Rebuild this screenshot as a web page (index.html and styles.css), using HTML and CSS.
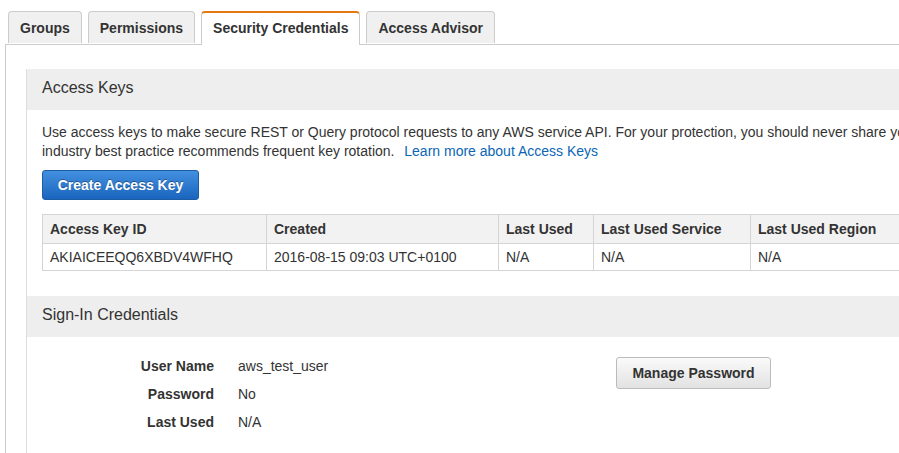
FILE: index.html
```html
<!DOCTYPE html>
<html>
<head>
<meta charset="utf-8">
<link rel="stylesheet" href="styles.css">
</head>
<body>
<div class="tabs">
  <div class="tab">Groups</div>
  <div class="tab">Permissions</div>
  <div class="tab active">Security Credentials</div>
  <div class="tab">Access Advisor</div>
</div>
<div class="panel">
  <div class="section">
    <div class="section-head">Access Keys</div>
    <div class="section-body keys-body">
      <p class="desc">Use access keys to make secure REST or Query protocol requests to any AWS service API. For your protection, you should never share your secret keys with anyone. As a best practice, we recommend frequent key rotation.<br>industry best practice recommends frequent key rotation.&nbsp; <a class="link" href="#">Learn more about Access Keys</a></p>
      <button class="btn-primary">Create Access Key</button>
      <table class="keys">
        <colgroup>
          <col class="c1"><col class="c2"><col class="c3"><col class="c4"><col class="c5">
        </colgroup>
        <thead>
          <tr><th>Access Key ID</th><th>Created</th><th>Last Used</th><th>Last Used Service</th><th>Last Used Region</th></tr>
        </thead>
        <tbody>
          <tr><td>AKIAICEEQQ6XBDV4WFHQ</td><td>2016-08-15 09:03 UTC+0100</td><td>N/A</td><td>N/A</td><td>N/A</td></tr>
        </tbody>
      </table>
    </div>
  </div>
  <div class="section">
    <div class="section-head">Sign-In Credentials</div>
    <div class="section-body creds">
      <div class="label">User Name</div><div class="value">aws_test_user</div>
      <div class="action"><button class="btn-default">Manage Password</button></div>
      <div class="label">Password</div><div class="value">No</div>
      <div class="label">Last Used</div><div class="value">N/A</div>
    </div>
  </div>
</div>
</body>
</html>
```
FILE: styles.css
```css
html, body {
  margin: 0;
  padding: 0;
  background: #fff;
  overflow: hidden;
}
body {
  font-family: "Liberation Sans", Arial, Helvetica, sans-serif;
  font-size: 14px;
  color: #333;
  width: 1300px;
}
.tabs {
  display: flex;
  gap: 6px;
  padding: 11px 0 0 8px;
  position: relative;
  z-index: 1;
}
.tab {
  height: 31px;
  line-height: 33px;
  padding: 0 11px;
  border: 1px solid #ccc;
  border-bottom: none;
  border-radius: 4px 4px 0 0;
  background: #f0f0f0;
  font-weight: bold;
  font-size: 14px;
  color: #333;
  margin-bottom: -1px;
}
.tab.active {
  background: #fff;
  border-top: 2px solid #e47911;
  line-height: 31px;
  height: 32px;
  padding: 0 11px;
}
.panel {
  margin-left: 5px;
  border-left: 1px solid #ccc;
  border-top: 1px solid #ccc;
  padding: 24px 0 0 20px;
}
.section {
  border-left: 1px solid #ddd;
}
.section-head {
  background: #eee;
  height: 41px;
  line-height: 38px;
  padding-left: 15px;
  font-size: 16px;
  color: #333;
}
.section-body {
  padding: 12px 0 25px 15px;
}
.keys-body {
  padding-top: 13px;
}
.desc {
  margin: 0;
  line-height: 19px;
  white-space: nowrap;
  height: 38px;
  overflow: hidden;
  color: #333;
}
.link {
  color: #0a66b5;
  text-decoration: none;
  margin-left: 2px;
}
.btn-primary {
  display: block;
  margin-top: 9px;
  width: 157px;
  height: 30px;
  border: 1px solid #1c5da3;
  border-radius: 3px;
  background: linear-gradient(#4390e0, #1a65be);
  color: #fff;
  font-family: "Liberation Sans", Arial, sans-serif;
  font-weight: bold;
  font-size: 14px;
  text-shadow: 0 -1px 0 rgba(0,0,0,0.35);
  padding: 0;
}
.keys {
  margin-top: 14px;
  border-collapse: collapse;
  table-layout: fixed;
  width: 1100px;
}
.c1 { width: 224px; }
.c2 { width: 232px; }
.c3 { width: 95px; }
.c4 { width: 157px; }
.c5 { width: 392px; }
.keys th, .keys td {
  border: 1px solid #d5d5d5;
  text-align: left;
  padding: 0 7px;
  font-size: 14px;
  color: #333;
  white-space: nowrap;
}
.keys th {
  background: #f2f2f2;
  font-weight: bold;
  height: 28px;
}
.keys td {
  height: 26px;
}
.creds {
  display: grid;
  grid-template-columns: 172px 354px auto;
  grid-auto-rows: 28px;
  column-gap: 24px;
  padding-top: 15px;
  align-items: center;
}
.label {
  text-align: right;
  font-weight: bold;
}
.value {
  color: #333;
}
.action {
  grid-column: 3;
  grid-row: 1 / span 2;
  align-self: start;
  padding-top: 5px;
}
.btn-default {
  width: 155px;
  height: 32px;
  border: 1px solid #bbb;
  border-radius: 3px;
  background: linear-gradient(#fafafa, #e2e2e2);
  color: #333;
  font-family: "Liberation Sans", Arial, sans-serif;
  font-weight: bold;
  font-size: 14px;
  padding: 0;
}
```
